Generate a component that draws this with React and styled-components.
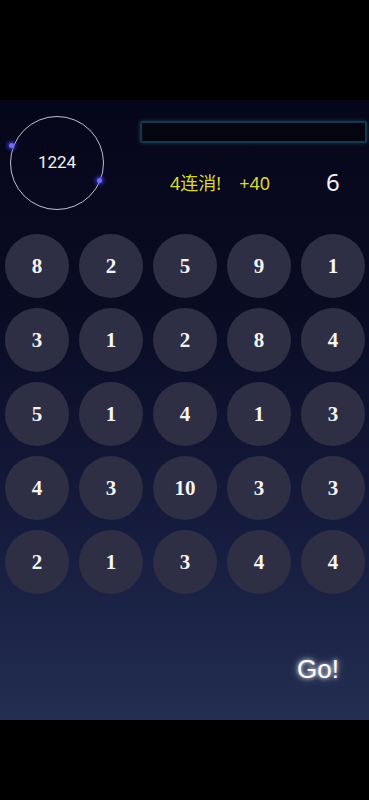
import React from 'react'
import styled, { createGlobalStyle } from 'styled-components'

const GlobalStyle = createGlobalStyle`
  html, body {
    margin: 0;
    padding: 0;
    background: #000;
  }
  * { box-sizing: border-box; }
`

const board = [
  [8, 2, 5, 9, 1],
  [3, 1, 2, 8, 4],
  [5, 1, 4, 1, 3],
  [4, 3, 10, 3, 3],
  [2, 1, 3, 4, 4],
]

const App = () => {
  return (
    <Page>
      <GlobalStyle />
      <Letterbox height={100} />
      <Stage>
        <Header>
          <Timer>
            <TimerValue>1224</TimerValue>
            <Dot x={1} y={29} />
            <Dot x={89} y={64} />
          </Timer>
          <Side>
            <Bar />
            <ScoreRow>
              <Combo>4连消!<Bonus>+40</Bonus></Combo>
              <Moves>6</Moves>
            </ScoreRow>
          </Side>
        </Header>
        <Grid>
          {board.flat().map((n, i) => (
            <Cell key={i}>{n}</Cell>
          ))}
        </Grid>
        <Footer>
          <GoButton>Go!</GoButton>
        </Footer>
      </Stage>
      <Letterbox height={80} />
    </Page>
  )
}

export default App

const Page = styled.div`
  width: 369px;
  height: 800px;
  display: flex;
  flex-direction: column;
  background: #000;
  overflow: hidden;
`

const Letterbox = styled.div`
  height: ${p => p.height}px;
  flex-shrink: 0;
  background: #000;
`

const Stage = styled.div`
  height: 620px;
  display: flex;
  flex-direction: column;
  background: linear-gradient(180deg, #06061a 0%, #0a0c24 35%, #161c3e 70%, #232e52 100%);
`

const Header = styled.div`
  display: flex;
  align-items: flex-start;
  padding: 16px 2px 0 10px;
  height: 134px;
`

const Timer = styled.div`
  position: relative;
  width: 94px;
  height: 94px;
  border-radius: 50%;
  border: 1.5px solid #bfc0cc;
  display: flex;
  align-items: center;
  justify-content: center;
  flex-shrink: 0;
`

const TimerValue = styled.span`
  font-family: 'Roboto', 'Noto Sans', sans-serif;
  font-size: 17px;
  color: #f2f2f2;
  margin-top: -2px;
`

const Dot = styled.span`
  position: absolute;
  left: ${p => p.x - 3}px;
  top: ${p => p.y - 3}px;
  width: 5px;
  height: 5px;
  border-radius: 50%;
  background: #6e6cff;
  box-shadow: 0 0 4px 1px #4a48ff;
`

const Side = styled.div`
  flex: 1;
  display: flex;
  flex-direction: column;
  padding-left: 36px;
  padding-top: 5px;
`

const Bar = styled.div`
  height: 22px;
  border: 2px solid #17384a;
  border-radius: 2px;
  box-shadow: 0 0 4px rgba(40, 110, 130, 0.5);
  background: #050512;
`

const ScoreRow = styled.div`
  display: flex;
  align-items: center;
  margin-top: 22px;
  padding-left: 30px;
`

const Combo = styled.span`
  font-family: 'Noto Sans', 'Noto Sans CJK SC', sans-serif;
  font-size: 18px;
  color: #d9d838;
  width: 156px;
  white-space: nowrap;
`

const Bonus = styled.span`
  margin-left: 18px;
`

const Moves = styled.span`
  font-family: 'Noto Sans', sans-serif;
  font-size: 24px;
  color: #f4f4f4;
`

const Grid = styled.div`
  display: grid;
  grid-template-columns: repeat(5, 64px);
  grid-auto-rows: 64px;
  gap: 10px;
  padding: 0 5px;
`

const Cell = styled.div`
  border-radius: 50%;
  background: #2e2f45;
  display: flex;
  align-items: center;
  justify-content: center;
  font-family: 'Liberation Serif', 'DejaVu Serif', serif;
  font-weight: bold;
  font-size: 21px;
  color: #f4f4f4;
`

const Footer = styled.div`
  flex: 1;
  display: flex;
  justify-content: flex-end;
  padding: 60px 30px 0 0;
`

const GoButton = styled.span`
  font-family: 'Liberation Sans', 'Noto Sans', sans-serif;
  font-size: 26px;
  color: #ffffff;
  height: 30px;
  text-shadow: 0 0 4px rgba(255, 255, 255, 0.9), 0 0 8px rgba(255, 255, 255, 0.5);
`
